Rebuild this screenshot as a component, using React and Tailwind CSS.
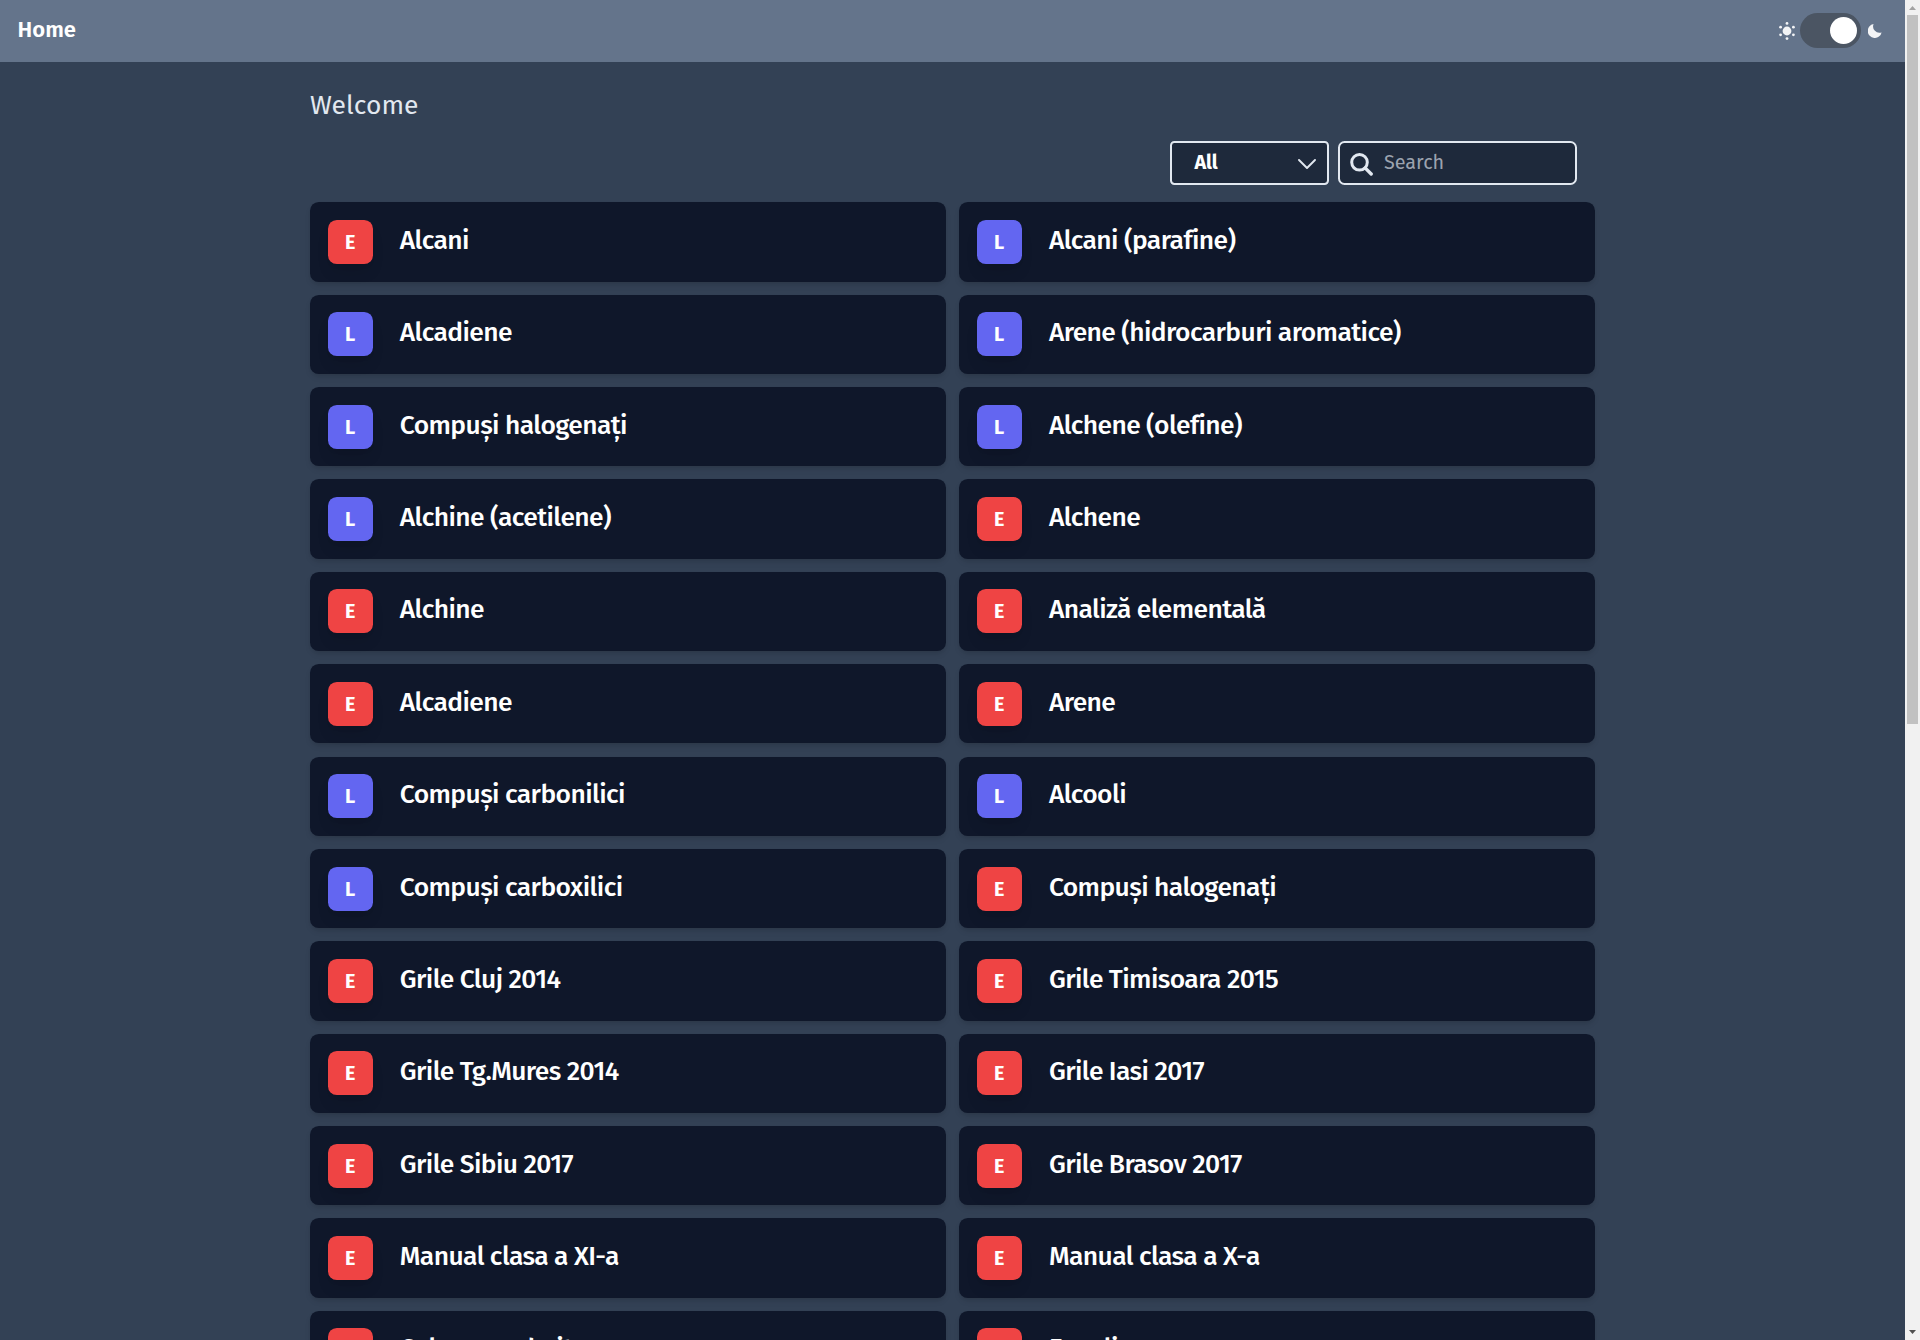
import React from "react";

const items = [
  ["E", "Alcani"], ["L", "Alcani (parafine)"],
  ["L", "Alcadiene"], ["L", "Arene (hidrocarburi aromatice)"],
  ["L", "Compuși halogenați"], ["L", "Alchene (olefine)"],
  ["L", "Alchine (acetilene)"], ["E", "Alchene"],
  ["E", "Alchine"], ["E", "Analiză elementală"],
  ["E", "Alcadiene"], ["E", "Arene"],
  ["L", "Compuși carbonilici"], ["L", "Alcooli"],
  ["L", "Compuși carboxilici"], ["E", "Compuși halogenați"],
  ["E", "Grile Cluj 2014"], ["E", "Grile Timisoara 2015"],
  ["E", "Grile Tg.Mures 2014"], ["E", "Grile Iasi 2017"],
  ["E", "Grile Sibiu 2017"], ["E", "Grile Brasov 2017"],
  ["E", "Manual clasa a XI-a"], ["E", "Manual clasa a X-a"],
  ["E", "Culegere admitere"], ["E", "Fenoli"],
];

function Sun() {
  return (
    <svg className="size-[18px]" viewBox="0 0 18 18" fill="#f3f4f6">
      <circle cx="9" cy="9" r="4.4" />
      <circle cx="9" cy="1.4" r="1.4" />
      <circle cx="9" cy="16.6" r="1.4" />
      <circle cx="2.6" cy="5.2" r="1.4" />
      <circle cx="15.4" cy="5.2" r="1.4" />
      <circle cx="2.6" cy="12.8" r="1.4" />
      <circle cx="15.4" cy="12.8" r="1.4" />
    </svg>
  );
}

function Moon() {
  return (
    <svg className="size-[14px]" viewBox="0 0 14 14" fill="#f3f4f6">
      <path d="M5.6 0.1 A7 7 0 1 0 13.6 8.4 A6.3 6.3 0 0 1 5.6 0.1 Z" />
    </svg>
  );
}

function Card({ kind, title }) {
  return (
    <div className="flex h-[79.19px] items-start rounded-[8.8px] bg-[#0f172a] px-[17.6px] pt-[17.6px] shadow-[0_4px_6px_-1px_rgba(0,0,0,0.1),0_2px_4px_-2px_rgba(0,0,0,0.1)]">
      <div
        className={
          "flex h-[44px] w-[45px] shrink-0 items-center justify-center rounded-[8.8px] text-[19.8px] leading-[26px] font-bold text-white shadow-[0_10px_15px_-3px_rgba(0,0,0,0.1),0_4px_6px_-4px_rgba(0,0,0,0.1)] " +
          (kind === "E" ? "bg-[#ef4444]" : "bg-[#6366f1]")
        }
      >
        {kind}
      </div>
      <div className="ml-[27.2px] text-[26.4px] leading-[40.6px] font-medium tracking-[-0.022em] whitespace-nowrap text-white">{title}</div>
    </div>
  );
}

export default function App() {
  return (
    <div className="flex h-[1340px] w-[1920px] overflow-hidden bg-[#334155] font-['Fira_Sans','Noto_Sans',sans-serif]">
      <div className="flex w-[1905px] flex-col">
        <header className="flex h-[62px] shrink-0 items-center justify-between bg-[#64748b] pr-[23px] pl-[17.6px]">
          <div className="pb-[2px] text-[22px] leading-[30px] font-semibold text-white">Home</div>
          <div className="flex items-center pb-px">
            <Sun />
            <div className="ml-[4.5px] flex h-[35px] w-[61px] items-center justify-end rounded-full bg-[#4b5563] pr-[4.4px]">
              <div className="size-[26.4px] rounded-full bg-white" />
            </div>
            <div className="ml-[7px]"><Moon /></div>
          </div>
        </header>
        <main className="w-[1595px] pl-[310px]">
          <h1 className="mt-[25px] text-[26.4px] leading-[36px] font-normal tracking-[0.003em] text-[#e2e8f0]">Welcome</h1>
          <div className="mt-[18px] flex h-[44px] justify-end gap-[9px] pr-[18px]">
            <div className="flex w-[159px] items-center justify-between rounded-[4.4px] border-2 border-[#e2e8f0] bg-[#1e293b] pr-[11px] pl-[22.5px] text-white">
              <span className="pb-[3px] text-[19.8px] leading-[26px] font-bold tracking-[-0.01em]">All</span>
              <svg className="mt-px h-[10px] w-[18px]" viewBox="0 0 18 10" fill="none" stroke="#e2e8f0" strokeWidth="1.9" strokeLinecap="round" strokeLinejoin="round">
                <path d="M1 1 L9 9 L17 1" />
              </svg>
            </div>
            <div className="flex w-[239px] items-center rounded-[6.6px] border-2 border-[#e2e8f0] bg-[#1e293b] pl-[10px]">
              <svg className="mt-[3px] size-[23px]" viewBox="0 0 23 23" fill="none" stroke="#e2e8f0" strokeLinecap="round">
                <circle cx="9.5" cy="9.3" r="7.8" strokeWidth="3" />
                <path d="M15.3 15.1 L21.2 21" strokeWidth="3.4" />
              </svg>
              <span className="ml-[11px] pb-[3px] text-[19.8px] leading-[26px] text-[#9ca3af]">Search</span>
            </div>
          </div>
          <div className="mt-[17.33px] grid grid-cols-2 gap-x-[13.2px] gap-y-[13.19px]">
            {items.map(([k, t], i) => <Card key={i} kind={k} title={t} />)}
          </div>
        </main>
      </div>
      <div className="flex w-[15px] flex-col items-center bg-[#f1f1f1]">
        <svg className="h-[15px] w-[15px] shrink-0" viewBox="0 0 15 15"><path d="M4 10 L7.5 6 L11 10 Z" fill="#a3a3a3" /></svg>
        <div className="h-[709px] w-[11px] shrink-0 bg-[#c1c1c1]" />
        <svg className="mt-auto h-[15px] w-[15px] shrink-0" viewBox="0 0 15 15"><path d="M4 5 H11 L7.5 9 Z" fill="#505050" /></svg>
      </div>
    </div>
  );
}
